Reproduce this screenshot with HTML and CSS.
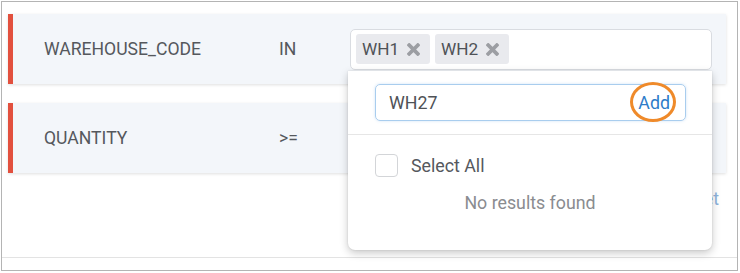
FILE: index.html
```html
<!DOCTYPE html>
<html>
<head>
<meta charset="utf-8">
<link rel="stylesheet" href="styles.css">
</head>
<body>
<div class="frame">
  <div class="card">
    <div class="label">WAREHOUSE_CODE</div>
    <div class="op">IN</div>
    <div class="field">
      <div class="multi">
        <span class="tag">WH1<svg class="x" viewBox="0 0 12 12"><path d="M2 2L10 10M10 2L2 10"/></svg></span>
        <span class="tag">WH2<svg class="x" viewBox="0 0 12 12"><path d="M2 2L10 10M10 2L2 10"/></svg></span>
      </div>
      <div class="dropdown">
        <div class="search-area">
          <div class="search">
            <span class="search-val">WH27</span>
            <span class="add">Add<span class="ring"></span></span>
          </div>
        </div>
        <div class="options">
          <label class="opt"><span class="cb"></span>Select All</label>
          <div class="empty">No results found</div>
        </div>
      </div>
    </div>
  </div>
  <div class="card">
    <div class="label">QUANTITY</div>
    <div class="op">&gt;=</div>
    <div class="field">
      <div class="multi"></div>
    </div>
  </div>
  <div class="links"><span class="link">Reset</span></div>
  <div class="footer-line"></div>
</div>
</body>
</html>
```
FILE: styles.css
```css
* { box-sizing: border-box; }
html, body { margin: 0; padding: 0; background: #fff; }
body { font-family: Roboto, "Noto Sans", sans-serif; color: #55585d; }

.frame {
  margin: 1px 0 0 1px;
  width: 737px;
  height: 270px;
  border: 1px solid #b4b4b4;
  padding: 12px 11px 0 6px;
  display: flex;
  flex-direction: column;
  gap: 19px;
}

.card {
  height: 70px;
  background: #f3f6fa;
  border-left: 5px solid #e2503e;
  box-shadow: 0 1px 3px rgba(0,0,0,0.13);
  display: flex;
  align-items: center;
  padding-left: 31px;
  flex-shrink: 0;
}
.label { width: 235px; font-size: 17.6px; }
.op { width: 71px; font-size: 17.6px; }
.field { position: relative; width: 362px; }
.multi {
  height: 41px;
  background: #fff;
  border: 1px solid #d9dce1;
  border-radius: 5px;
  padding: 5px;
  display: flex;
  gap: 5px;
  align-items: center;
}
.tag {
  height: 30px;
  background: #e9eaee;
  border-radius: 3px;
  display: inline-flex;
  align-items: center;
  padding: 0 10px 0 6px;
  font-size: 17.2px;
  color: #4f5257;
  width: 74px;
  justify-content: space-between;
}
.x { width: 13px; height: 13px; }
.x path { stroke: #9c9ea3; stroke-width: 3.4; stroke-linecap: square; fill: none; }

.dropdown {
  position: absolute;
  top: 42px;
  left: -2px;
  right: 0;
  height: 179px;
  background: #fff;
  border-radius: 0 0 7px 7px;
  box-shadow: 0 3px 8px rgba(0,0,0,0.22), 0 0 2px rgba(0,0,0,0.12);
  z-index: 5;
}
.search-area {
  height: 64px;
  border-bottom: 1px solid #e6e6e6;
  padding: 13px 26px 0 27px;
}
.search {
  height: 37px;
  border: 1px solid #a9cdee;
  border-radius: 5px;
  box-shadow: 0 0 3px rgba(120,175,230,0.35);
  display: flex;
  align-items: center;
  justify-content: space-between;
  padding: 0 15px 0 13px;
  font-size: 17.8px;
}
.search-val { color: #4f5257; }
.add { position: relative; color: #2d7cc9; }
.ring {
  position: absolute;
  left: -8px;
  top: -10px;
  width: 46px;
  height: 40px;
  border: 3px solid #ef8a2a;
  border-radius: 50%;
}
.options { padding: 19px 0 0 27px; }
.opt {
  display: flex;
  align-items: center;
  gap: 13px;
  font-size: 17.8px;
  color: #55585d;
  height: 24px;
}
.cb {
  width: 23px;
  height: 23px;
  border: 1px solid #d3d5d8;
  border-radius: 4px;
  background: #fff;
}
.empty {
  margin: 14px 0 0 -27px;
  text-align: center;
  font-size: 17.8px;
  color: #8a8c90;
}

.links {
  height: 24px;
  margin-top: -4px;
  text-align: right;
  padding-right: 7px;
  font-size: 17.8px;
  flex-shrink: 0;
}
.link { color: #8db3db; }
.footer-line {
  margin: 26px -11px 0 -6px;
  border-top: 1px solid #e3e3e3;
  flex-shrink: 0;
}
```
